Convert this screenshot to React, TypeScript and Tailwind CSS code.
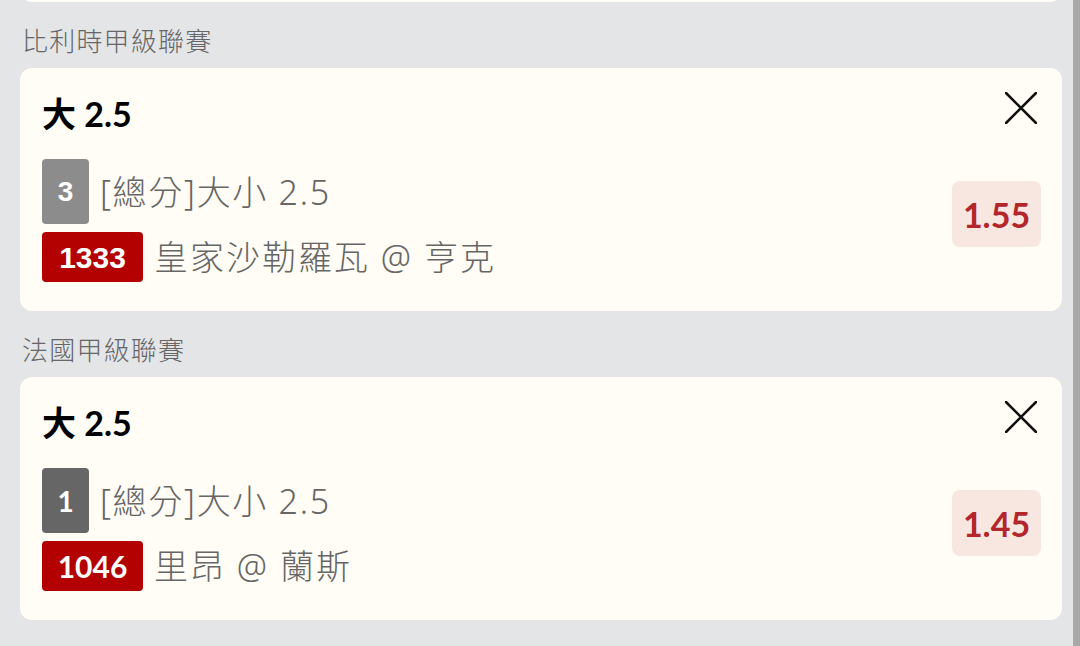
import React from "react";

const CJK = '"Noto Sans CJK TC", sans-serif';

function CloseIcon() {
  return (
    <svg width="32" height="32" viewBox="0 0 32 32" fill="none">
      <path d="M1 1 L31 31 M31 1 L1 31" stroke="#111" strokeWidth="2.6" strokeLinecap="round" />
    </svg>
  );
}

type Bet = {
  league: string;
  seq: string;
  seqBg: string;
  seqFont: string;
  code: string;
  codeFont: string;
  teams: string;
  odds: string;
};

const bets: Bet[] = [
  {
    league: "比利時甲級聯賽",
    seq: "3",
    seqBg: "bg-[#8c8c8c]",
    seqFont: "font-['Liberation_Sans','Noto_Sans_CJK_TC',sans-serif]",
    code: "1333",
    codeFont: "font-['Liberation_Sans','Noto_Sans_CJK_TC',sans-serif]",
    teams: "皇家沙勒羅瓦 @ 亨克",
    odds: "1.55",
  },
  {
    league: "法國甲級聯賽",
    seq: "1",
    seqBg: "bg-[#666666]",
    seqFont: "font-['Lato','Noto_Sans_CJK_TC',sans-serif]",
    code: "1046",
    codeFont: "font-['Lato','Noto_Sans_CJK_TC',sans-serif]",
    teams: "里昂 @ 蘭斯",
    odds: "1.45",
  },
];

function BetCard({ b }: { b: Bet }) {
  return (
    <>
      <div className="mt-[22px] mb-[12px] pl-[2px] text-[26px] leading-[32px] tracking-[1.2px] font-light text-[#666] font-['Noto_Sans_CJK_TC',sans-serif]">
        {b.league}
      </div>
      <div className="flex h-[243px] rounded-[12px] bg-[#fffdf5] pl-[22px] pr-[21px]">
        <div className="flex flex-1 flex-col">
          <div className="mt-[26px] h-[40px] text-[34px] leading-[40px] font-bold text-black font-['Lato','Noto_Sans_CJK_TC',sans-serif]">
            大 2.5
          </div>
          <div className="mt-[25px] flex items-center">
            <div
              className={`flex h-[65px] w-[47px] items-center justify-center rounded-[4px] ${b.seqBg} text-[28px] font-bold text-white ${b.seqFont}`}
            >
              {b.seq}
            </div>
            <div className="ml-[11px] text-[34px] leading-[40px] tracking-[1.7px] font-light text-[#666] font-['Noto_Sans','Noto_Sans_CJK_TC',sans-serif]">
              [總分]大小 2.5
            </div>
          </div>
          <div className="mt-[8px] flex items-center">
            <div
              className={`flex h-[50px] w-[101px] items-center justify-center rounded-[4px] bg-[#b30000] text-[30px] font-bold text-white ${b.codeFont}`}
            >
              {b.code}
            </div>
            <div className="ml-[11px] text-[34px] leading-[40px] tracking-[2px] font-light text-[#666] font-['Noto_Sans','Noto_Sans_CJK_TC',sans-serif]">
              {b.teams}
            </div>
          </div>
        </div>
        <div className="flex flex-col items-end">
          <div className="mt-[24px] mr-[4px]">
            <CloseIcon />
          </div>
          <div className="mt-[57px] flex h-[66px] w-[89px] items-center justify-center rounded-[8px] bg-[#f8e7e1] text-[34px] font-bold text-[#b3262b] font-['Lato',sans-serif]">
            {b.odds}
          </div>
        </div>
      </div>
    </>
  );
}

export default function App() {
  return (
    <div className="flex h-[646px] w-[1080px] overflow-hidden bg-[#e4e5e7]" style={{ fontFamily: CJK }}>
      <div className="flex flex-1 flex-col pl-[20px] pr-[11px]">
        <div className="-mt-[38px] h-[40px] rounded-[12px] bg-[#fffdf5]" />
        {bets.map((b) => (
          <BetCard key={b.code} b={b} />
        ))}
      </div>
      <div className="w-[7px] bg-[#a9a9a9]" />
    </div>
  );
}
